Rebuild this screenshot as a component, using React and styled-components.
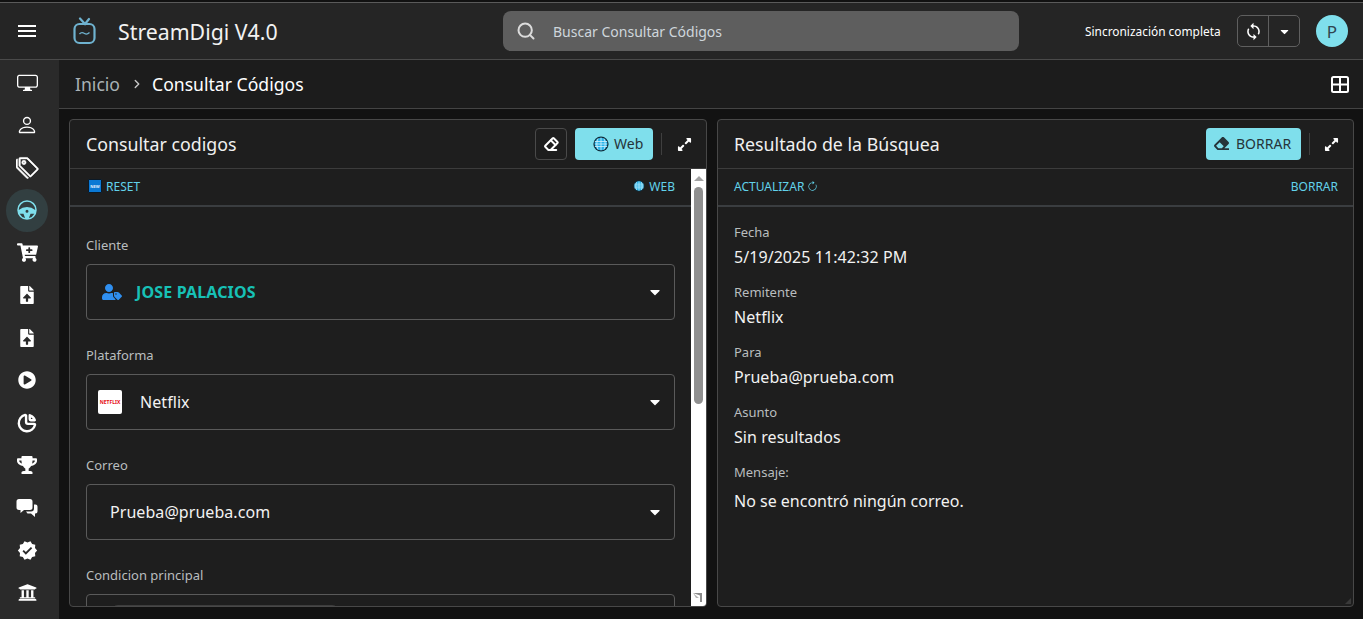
import React from "react";
import styled, { createGlobalStyle } from "styled-components";
import {
  FaCartPlus,
  FaCaretDown,
  FaEraser,
  FaExpandAlt,
  FaFileUpload,
  FaPlayCircle,
  FaTrophy,
  FaUniversity,
  FaUserTag,
} from "react-icons/fa";
import { BsArrowClockwise, BsDisplay, BsPerson, BsTags } from "react-icons/bs";
import { FiChevronRight, FiSearch } from "react-icons/fi";
import { MdSync, MdVerified } from "react-icons/md";
import { PiSteeringWheelFill } from "react-icons/pi";
import { TbChartPie, TbEraser } from "react-icons/tb";

const GlobalStyle = createGlobalStyle`
  html, body {
    margin: 0;
    height: 100%;
    background: #121212;
    overflow: hidden;
  }
  * { box-sizing: border-box; }
  body {
    font-family: "Noto Sans", "Open Sans", sans-serif;
    color: #fff;
  }
`;

const Page = styled.div`
  display: flex;
  flex-direction: column;
  width: 1363px;
  height: 619px;
  overflow: hidden;
`;

const TopBar = styled.header`
  flex: none;
  display: flex;
  align-items: center;
  height: 60px;
  padding-top: 1px;
  background: #252525;
  border-top: 2px solid #111;
  border-bottom: 1px solid #4a4a4a;
  box-shadow: inset 0 1px 0 #5a5a5a;
`;

const Burger = styled.button`
  display: flex;
  flex-direction: column;
  gap: 3px;
  width: 18px;
  margin: 0 37px 0 18px;
  padding: 0;
  border: 0;
  background: none;
  span {
    display: block;
    height: 2px;
    background: #fff;
  }
`;

const BrandName = styled.div`
  width: 385px;
  margin-left: 21px;
  font-size: 21.3px;
  color: #f2f2f2;
`;

const SearchBox = styled.div`
  display: flex;
  align-items: center;
  width: 516px;
  height: 40px;
  padding-left: 13px;
  border-radius: 8px;
  background: #5e5e5e;
  color: #cfd6dc;
  font-size: 14px;
  svg {
    margin-right: 17px;
    color: #dcdcdc;
  }
`;

const TopRight = styled.div`
  display: flex;
  align-items: center;
  margin-left: 66px;
`;

const SyncText = styled.span`
  font-size: 11.9px;
  width: 152px;
`;

const SplitButton = styled.div`
  display: flex;
  width: 63px;
  height: 32px;
  border: 1px solid #5f5f5f;
  border-radius: 5px;
`;

const SplitPart = styled.div`
  display: flex;
  align-items: center;
  justify-content: center;
  flex: ${(p) => (p.$wide ? "0 0 31px" : "1")};
  border-right: ${(p) => (p.$wide ? "1px solid #5f5f5f" : "0")};
`;

const Avatar = styled.div`
  display: flex;
  align-items: center;
  justify-content: center;
  width: 32px;
  height: 32px;
  margin-left: 16px;
  border-radius: 50%;
  background: #7fdfec;
  color: #2f4550;
  font-size: 17px;
`;

const Body = styled.div`
  flex: 1;
  display: flex;
  min-height: 0;
`;

const SideNav = styled.nav`
  flex: none;
  display: flex;
  flex-direction: column;
  align-items: center;
  width: 59px;
  padding: 1.5px 5px 0 0;
  background: #2a2a2a;
  overflow: hidden;
`;

const NavItem = styled.div`
  flex: none;
  display: flex;
  align-items: center;
  justify-content: center;
  width: 42px;
  height: 42.5px;
  color: #fff;
  ${(p) =>
    p.$active &&
    `
    border-radius: 50%;
    background: #323f41;
    color: #7fdfec;
  `}
`;

const Main = styled.main`
  flex: 1;
  display: flex;
  flex-direction: column;
  min-width: 0;
`;

const Crumbs = styled.div`
  flex: none;
  display: flex;
  align-items: center;
  height: 49px;
  padding: 0 14px 0 16px;
  background: #1c1c1c;
  border-bottom: 1px solid #444;
  font-size: 17.6px;
`;

const CrumbMuted = styled.span`
  color: #a9b2b6;
`;

const CrumbArrow = styled.span`
  display: flex;
  margin: 0 8px 0 10px;
  color: #c8c8c8;
  font-size: 14px;
`;

const GridButton = styled.svg`
  margin-left: auto;
`;

const Panels = styled.div`
  flex: 1;
  display: grid;
  grid-template-columns: 638px 637px;
  gap: 10px;
  padding: 10px 9px 12px 10px;
  min-height: 0;
`;

const Panel = styled.section`
  display: flex;
  flex-direction: column;
  position: relative;
  min-height: 0;
  background: #1e1e1e;
  border: 1px solid #484848;
  border-radius: 4px;
  overflow: hidden;
`;

const PanelHead = styled.div`
  flex: none;
  display: flex;
  align-items: center;
  height: 49px;
  padding: 0 14px 0 16px;
  border-bottom: 1px solid #3c3c3c;
`;

const PanelTitle = styled.h2`
  flex: 1;
  margin: 0;
  font-size: 17.8px;
  font-weight: 400;
  color: #f0f0f0;
`;

const IconButton = styled.button`
  display: flex;
  align-items: center;
  justify-content: center;
  width: 32px;
  height: 32px;
  margin-right: 8px;
  padding: 0;
  background: none;
  border: 1px solid #4a4a4a;
  border-radius: 4px;
  color: #fff;
`;

const AccentButton = styled.button`
  display: flex;
  align-items: center;
  gap: ${(p) => p.$gap}px;
  width: ${(p) => p.$width}px;
  height: 32px;
  padding: 0 0 1px ${(p) => p.$pad}px;
  background: #7fdfec;
  border: 0;
  border-radius: 4px;
  color: #26343a;
  font-family: inherit;
  font-size: 14px;
`;

const HeadRule = styled.span`
  width: 1px;
  height: 22px;
  margin: 0 ${(p) => p.$after}px 0 8px;
  background: #3f3f3f;
`;

const ExpandIcon = styled(FaExpandAlt)`
  color: #fff;
  font-size: 15px;
`;

const PanelRow = styled.div`
  flex: 1;
  display: flex;
  min-height: 0;
`;

const PanelColumn = styled.div`
  flex: 1;
  display: flex;
  flex-direction: column;
  min-width: 0;
  overflow: hidden;
`;

const SubBar = styled.div`
  flex: none;
  display: flex;
  align-items: center;
  justify-content: space-between;
  height: 38px;
  padding: 0 ${(p) => p.$right}px 2px ${(p) => p.$left}px;
  border-bottom: 2px solid #3a3d40;
  color: #62d2ea;
  font-size: 12px;
`;

const SubLink = styled.span`
  display: flex;
  align-items: center;
  gap: ${(p) => p.$gap || 4}px;
`;

const NewTile = styled.span`
  display: flex;
  align-items: center;
  justify-content: center;
  width: 14px;
  height: 14px;
  border: 1px solid #0b1a28;
  border-radius: 1px;
  background: #0a78d4;
  color: #e4f2fd;
  font-size: 4px;
  font-weight: 700;
`;

const Form = styled.div`
  padding: 29px 16px 0;
`;

const Field = styled.div`
  margin-bottom: 26px;
`;

const FieldLabel = styled.div`
  height: 18px;
  margin-bottom: 10px;
  font-size: 13px;
  line-height: 18px;
  color: #b9bdbf;
`;

const SelectBox = styled.div`
  display: flex;
  align-items: center;
  height: 56px;
  padding: 0 11px 0 ${(p) => p.$pad}px;
  border: 1px solid #5a5a5a;
  border-radius: 4px;
  font-size: 16px;
  letter-spacing: 0.06px;
  color: #f2f2f2;
`;

const SelectValue = styled.span`
  flex: 1;
  margin-left: ${(p) => p.$gap || 0}px;
  ${(p) =>
    p.$client &&
    `
    color: #17c1b6;
    font-weight: 700;
    letter-spacing: 0.15px;
  `}
`;

const ClientIcon = styled(FaUserTag)`
  color: #2f8ff0;
  font-size: 20px;
`;

const Caret = styled(FaCaretDown)`
  color: #fff;
  font-size: 16px;
`;

const NetflixTile = styled.span`
  display: flex;
  align-items: center;
  justify-content: center;
  width: 24px;
  height: 24px;
  border-radius: 2px;
  background: #fff;
  color: #e50914;
  font-size: 5px;
  font-weight: 700;
  letter-spacing: 0;
`;

const ChipPeek = styled.span`
  display: block;
  width: 230px;
  height: 34px;
  border: 1px solid #3d3d3d;
  border-radius: 8px;
  background: #2a2a2a;
`;

const ScrollBar = styled.div`
  flex: none;
  display: flex;
  flex-direction: column;
  align-items: center;
  width: 15px;
  background: #fff;
`;

const ScrollArrow = styled.span`
  flex: none;
  width: 0;
  height: 0;
  margin: 7px 0 6px;
  border-left: 5px solid transparent;
  border-right: 5px solid transparent;
  border-bottom: 5px solid #a3a3a3;
`;

const ScrollThumb = styled.div`
  flex: none;
  width: 9px;
  height: 217px;
  border-radius: 5px;
  background: #8f8f8f;
`;

const ResizeCorner = styled.svg`
  margin-top: auto;
  margin-bottom: 3px;
`;

const ResultList = styled.div`
  padding: 16px 16px 0;
`;

const ResultItem = styled.div`
  height: 60px;
`;

const ResultLabel = styled.div`
  height: 18px;
  margin-bottom: 4px;
  font-size: 13px;
  line-height: 18px;
  color: #b9bdbf;
`;

const ResultValue = styled.div`
  height: 24px;
  font-size: 16px;
  line-height: 24px;
  letter-spacing: 0.06px;
  color: #f2f2f2;
`;

const MessageValue = styled(ResultValue)`
  margin-top: 8px;
  letter-spacing: 0;
`;

const PanelGrip = styled.svg`
  position: absolute;
  right: 1px;
  bottom: 1px;
`;

const StreamLogo = () => (
  <svg width="24" height="28" viewBox="0 0 24 28" fill="none" stroke="#6fb2cf" strokeWidth="2.2">
    <rect x="1.5" y="7" width="20" height="19" rx="5" />
    <path d="M7 1.5l5 5.5 4-5" strokeLinecap="round" />
    <path d="M6.5 17c2-2.5 3.5-1.5 5-.5s3 1 5-1" strokeWidth="1.3" />
  </svg>
);

const GlobeIcon = ({ size = 16 }) => (
  <svg width={size} height={size} viewBox="0 0 16 16">
    <circle cx="8" cy="8" r="7.6" fill="#0f2a38" />
    <circle cx="8" cy="8" r="6.3" fill="#27b3ea" />
    <path
      d="M1.8 5.5h12.4M1.8 8h12.4M1.8 10.5h12.4M8 1.7v12.6M5 2.5c-1.6 3.5-1.6 7.5 0 11M11 2.5c1.6 3.5 1.6 7.5 0 11"
      stroke="#d5f3fc"
      strokeWidth="0.8"
      fill="none"
    />
  </svg>
);

const GridIcon = () => (
  <GridButton width="18" height="17" viewBox="0 0 18 17" fill="none" stroke="#fff" strokeWidth="2">
    <rect x="1" y="1" width="16" height="15" rx="1.5" />
    <path d="M9 1v15M1 8.5h16" />
  </GridButton>
);

const GripIcon = () => (
  <ResizeCorner width="11" height="11" viewBox="0 0 11 11">
    <path d="M0 1h9v9H7V3.5z" fill="#8a8a8a" />
    <path d="M0 1l6 5H3z" fill="#b5b5b5" />
  </ResizeCorner>
);

const ChatsIcon = () => (
  <svg width="22" height="20" viewBox="0 0 22 20" fill="#fff">
    <path d="M3 1h11a2.5 2.5 0 0 1 2.5 2.5v6A2.5 2.5 0 0 1 14 12H8l-3.5 3v-3H3A2.5 2.5 0 0 1 .5 9.500v-6A2.500 2.500 0 0 1 3 1z" />
    <path d="M18 6.500h1.500A2 2 0 0 1 21.500 8.500v5a2 2 0 0 1-2 2H19V19l-4-3.500h-3.500l-1.500-2h5a3 3 0 0 0 3-3z" />
  </svg>
);

const navItems = [
  { icon: <BsDisplay size={21} /> },
  { icon: <BsPerson size={22} /> },
  { icon: <BsTags size={23} stroke="currentColor" strokeWidth={0.4} /> },
  { icon: <PiSteeringWheelFill size={24} />, active: true },
  { icon: <FaCartPlus size={21} /> },
  { icon: <FaFileUpload size={18} /> },
  { icon: <FaFileUpload size={18} /> },
  { icon: <FaPlayCircle size={18} /> },
  { icon: <TbChartPie size={22} strokeWidth={2.6} /> },
  { icon: <FaTrophy size={20} /> },
  { icon: <ChatsIcon /> },
  { icon: <MdVerified size={21} /> },
  { icon: <FaUniversity size={19} /> },
];

const results = [
  { label: "Fecha", value: "5/19/2025 11:42:32 PM" },
  { label: "Remitente", value: "Netflix" },
  { label: "Para", value: "Prueba@prueba.com" },
  { label: "Asunto", value: "Sin resultados" },
];

export default function App() {
  return (
    <Page>
      <GlobalStyle />
      <TopBar>
        <Burger aria-label="Menu">
          <span />
          <span />
          <span />
        </Burger>
        <StreamLogo />
        <BrandName>StreamDigi V4.0</BrandName>
        <SearchBox>
          <FiSearch size={20} strokeWidth={2.4} />
          Buscar Consultar Códigos
        </SearchBox>
        <TopRight>
          <SyncText>Sincronización completa</SyncText>
          <SplitButton>
            <SplitPart $wide>
              <MdSync size={19} />
            </SplitPart>
            <SplitPart>
              <FaCaretDown size={13} />
            </SplitPart>
          </SplitButton>
          <Avatar>P</Avatar>
        </TopRight>
      </TopBar>
      <Body>
        <SideNav>
          {navItems.map((item, i) => (
            <NavItem key={i} $active={item.active}>
              {item.icon}
            </NavItem>
          ))}
        </SideNav>
        <Main>
          <Crumbs>
            <CrumbMuted>Inicio</CrumbMuted>
            <CrumbArrow>
              <FiChevronRight strokeWidth={2.4} />
            </CrumbArrow>
            <span>Consultar Códigos</span>
            <GridIcon />
          </Crumbs>
          <Panels>
            <Panel>
              <PanelHead>
                <PanelTitle>Consultar codigos</PanelTitle>
                <IconButton>
                  <TbEraser size={18} strokeWidth={2.6} />
                </IconButton>
                <AccentButton $width={78} $pad={18} $gap={5}>
                  <GlobeIcon />
                  Web
                </AccentButton>
                <HeadRule $after={15} />
                <ExpandIcon />
              </PanelHead>
              <PanelRow>
                <PanelColumn>
                  <SubBar $left={18} $right={16}>
                    <SubLink>
                      <NewTile>NEW</NewTile>
                      RESET
                    </SubLink>
                    <SubLink>
                      <GlobeIcon size={12} />
                      WEB
                    </SubLink>
                  </SubBar>
                  <Form>
                    <Field>
                      <FieldLabel>Cliente</FieldLabel>
                      <SelectBox $pad={15}>
                        <ClientIcon />
                        <SelectValue $client $gap={14}>
                          JOSE PALACIOS
                        </SelectValue>
                        <Caret />
                      </SelectBox>
                    </Field>
                    <Field>
                      <FieldLabel>Plataforma</FieldLabel>
                      <SelectBox $pad={11}>
                        <NetflixTile>NETFLIX</NetflixTile>
                        <SelectValue $gap={18}>Netflix</SelectValue>
                        <Caret />
                      </SelectBox>
                    </Field>
                    <Field>
                      <FieldLabel>Correo</FieldLabel>
                      <SelectBox $pad={23}>
                        <SelectValue>Prueba@prueba.com</SelectValue>
                        <Caret />
                      </SelectBox>
                    </Field>
                    <Field>
                      <FieldLabel>Condicion principal</FieldLabel>
                      <SelectBox $pad={23}>
                        <ChipPeek />
                      </SelectBox>
                    </Field>
                  </Form>
                </PanelColumn>
                <ScrollBar>
                  <ScrollArrow />
                  <ScrollThumb />
                  <GripIcon />
                </ScrollBar>
              </PanelRow>
            </Panel>
            <Panel>
              <PanelHead>
                <PanelTitle>Resultado de la Búsquea</PanelTitle>
                <AccentButton $width={95} $pad={8} $gap={7}>
                  <FaEraser size={15} />
                  BORRAR
                </AccentButton>
                <HeadRule $after={14} />
                <ExpandIcon />
              </PanelHead>
              <SubBar $left={16} $right={15}>
                <SubLink $gap={3}>
                  ACTUALIZAR
                  <BsArrowClockwise size={11} />
                </SubLink>
                <SubLink>BORRAR</SubLink>
              </SubBar>
              <ResultList>
                {results.map((r) => (
                  <ResultItem key={r.label}>
                    <ResultLabel>{r.label}</ResultLabel>
                    <ResultValue>{r.value}</ResultValue>
                  </ResultItem>
                ))}
                <ResultLabel>Mensaje:</ResultLabel>
                <MessageValue>No se encontró ningún correo.</MessageValue>
              </ResultList>
              <PanelGrip width="8" height="8" viewBox="0 0 8 8">
                <path d="M7 1v6H1z" fill="#3a3a3a" />
              </PanelGrip>
            </Panel>
          </Panels>
        </Main>
      </Body>
    </Page>
  );
}
